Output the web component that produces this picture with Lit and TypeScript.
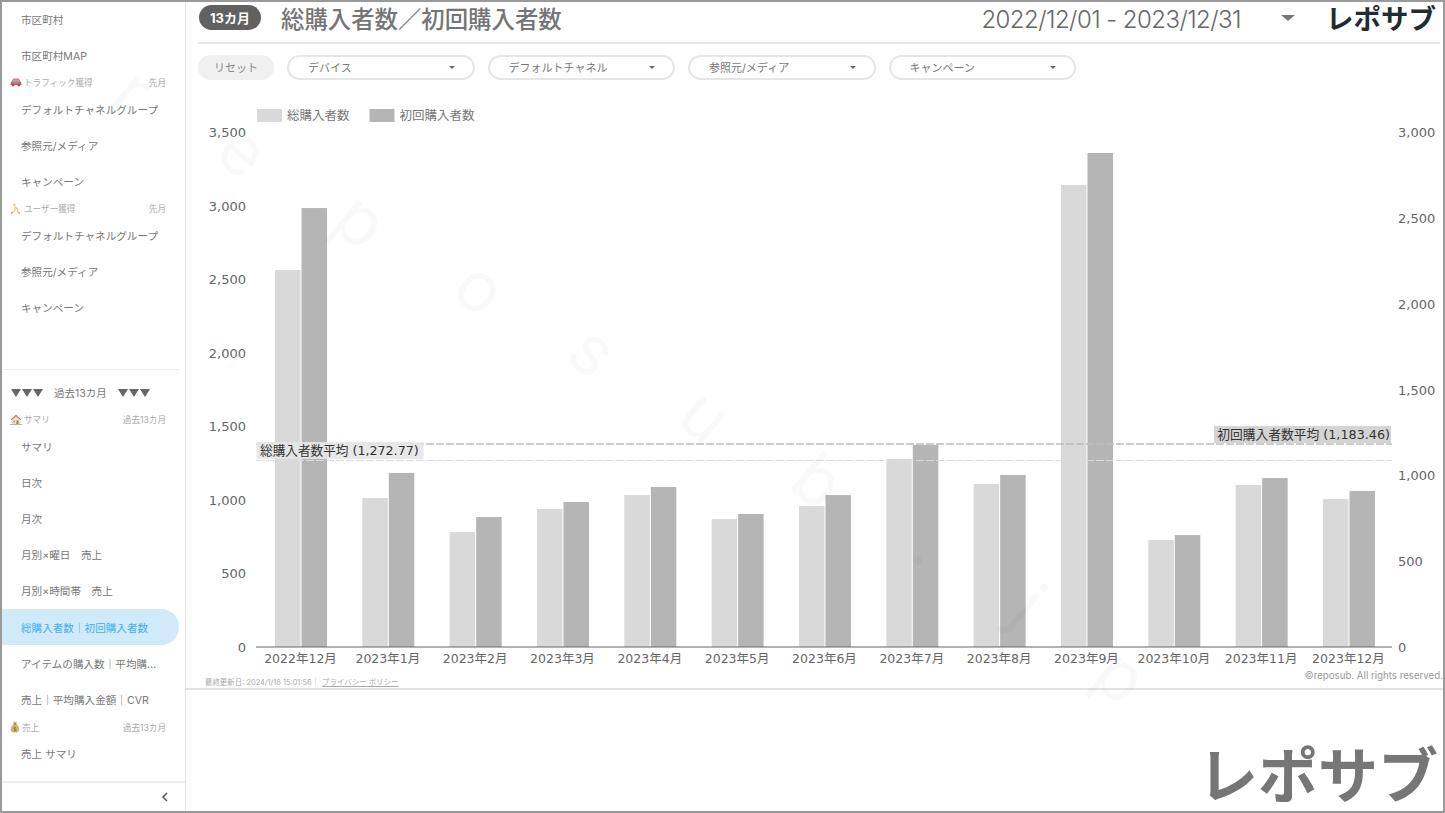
import { LitElement, html, css, svg } from "lit";
import { customElement } from "lit/decorators.js";

const months = ["2022年12月","2023年1月","2023年2月","2023年3月","2023年4月","2023年5月","2023年6月","2023年7月","2023年8月","2023年9月","2023年10月","2023年11月","2023年12月"];
const total = [2562,1013,782,938,1033,870,958,1278,1108,3140,727,1101,1006];
const first = [2557,1014,757,845,932,775,885,1177,1002,2878,652,984,909];
const base = 647, top = 132;
const yL = (v: number) => base - (v / 3500) * (base - top);
const yR = (v: number) => base - (v / 3000) * (base - top);
const wm: [string, number, number][] = [["r",130,95],["e",240,155],["p",358,225],["o",477,292],["s",590,355],["u",702,420],["b",815,485],[".",927,549],["j",1025,610],["p",1118,680]];

const car = svg`<svg width="12" height="10" viewBox="0 0 12 10"><path d="M1 5.500 3 2.200Q3.400 1.500 4.400 1.500H8Q9 1.500 9.400 2.400L10.600 5 11.500 5.800V8H.5V6Z" fill="#e2666c"/><path d="M3.600 2.600H8.400L9.200 4.800H2.600Z" fill="#7cc0d8"/><circle cx="3" cy="8" r="1.400" fill="#666"/><circle cx="9" cy="8" r="1.400" fill="#666"/></svg>`;
const runner = svg`<svg width="12" height="11" viewBox="0 0 12 11"><circle cx="4.500" cy="1.800" r="1.400" fill="#ecd59c"/><path d="M4.500 3.500 7 5.500 7.500 8.500 9.500 10M5 5 4.500 7.500 2 10" fill="none" stroke="#e3c98f" stroke-width="1.300"/><path d="M1 10.500 2.500 9.500M8.500 10.500 10 9.500" stroke="#9a8fc4" stroke-width="1.200"/></svg>`;
const house = svg`<svg width="12" height="11" viewBox="0 0 12 11"><path d="M2 5.500 6 1.500l4 4V10H2Z" fill="#efe0c0"/><path d="M.6 5.600 6 .8l5.400 4.800-.8.600L6 2.200 1.400 6.200Z" fill="#c2686a"/><rect x="3" y="6.500" width="2" height="2" fill="#8fc4d8"/><rect x="6.500" y="6.500" width="2" height="3.500" fill="#9a7a5b"/><path d="M0 10.500H12" stroke="#a4c284"/></svg>`;
const bag = svg`<svg width="10" height="12" viewBox="0 0 10 12"><path d="M3.200 .8H6.800L6 3C8.500 4.500 9.500 7 9.300 9 9 11 7.500 11.500 5 11.500S1 11 .7 9C.5 7 1.500 4.500 4 3Z" fill="#d8b36d"/><path d="M3.500 3H6.500" stroke="#8d6c36"/><text x="5" y="9.500" font-size="6" text-anchor="middle" fill="#7a5a25" font-family="DejaVu Sans">$</text></svg>`;

@customElement("app-root")
export class AppRoot extends LitElement {
  static styles = css`
    :host { display: block; width: 1445px; height: 813px; overflow: hidden; background: #fff; font-family: Inter, "Noto Sans CJK JP", sans-serif; color: #757575; }
    .frame { position: relative; box-sizing: border-box; width: 1445px; height: 813px; border: 2px solid #9a9a9a; display: flex; overflow: hidden; }
    .side { width: 183px; flex: none; border-right: 1px solid #e4e4e4; display: flex; flex-direction: column; margin-top: -1px; height: 810px; }
    .list { flex: none; }
    .item { display: flex; align-items: center; height: 36px; padding-left: 19px; font-size: 10.600px; color: #777; white-space: nowrap; }
    .lower .item { height: 36.200px; }
    .item.active { background: #d1eafa; color: #3fb0ef; border-radius: 0 18px 18px 0; width: 158px; }
    .head { display: flex; align-items: center; height: 18px; padding: 0 19px 0 8px; font-size: 8.600px; color: #aaa; gap: 2px; }
    .head span:last-of-type { margin-left: auto; }
    .head svg { flex: none; }
    .rule { margin: 44px 6px 5px 1px; border-top: 1px solid #eee; }
    .past { display: flex; align-items: center; height: 35px; padding-left: 9px; font-size: 10.500px; color: #777; gap: 11px; }
    .tri { display: flex; gap: 1px; }
    .tri i { width: 0; height: 0; border-left: 5px solid transparent; border-right: 5px solid transparent; border-top: 8px solid #666; }
    .foot { margin-top: 9px; border-top: 2px solid #eee; flex: 1; display: flex; justify-content: flex-end; align-items: center; padding-right: 16px; }
    .main { flex: 1; min-width: 0; display: flex; flex-direction: column; }
    .top { display: flex; align-items: center; height: 40px; margin: 0 3px 0 12px; border-bottom: 2px solid #e8e8e8; box-sizing: content-box; }
    .badge { width: 62px; height: 25px; margin-left: 1px; border-radius: 13px; background: #616161; color: #fff; font-size: 13px; font-weight: 700; display: flex; align-items: center; justify-content: center; margin-top: -9px; }
    .title { margin: -9px 0 0 20px; font-size: 23.400px; font-weight: 500; color: #757575; white-space: nowrap; }
    .date { margin: -5px 0 0 auto; font-size: 24px; font-weight: 300; color: #666; white-space: nowrap; letter-spacing: -.55px; }
    .caret { width: 0; height: 0; border-left: 7px solid transparent; border-right: 7px solid transparent; border-top: 6px solid #777; margin: -8px 0 0 40px; }
    .logo { margin: -9px 4px 0 31px; font-family: "Noto Sans CJK JP", sans-serif; font-weight: 700; font-size: 27.500px; line-height: 1.3; color: #1f2d33; white-space: nowrap; }
    .filters { display: flex; gap: 13px; margin: 11px 0 0 12px; }
    .reset { box-sizing: border-box; width: 76px; height: 25px; padding-bottom: 2px; border-radius: 13px; background: #f0f0f0; font-size: 11px; color: #888; display: flex; align-items: center; justify-content: center; }
    .sel { box-sizing: border-box; width: 187.500px; height: 25px; border: 2px solid #e6e6e6; border-radius: 13px; font-size: 11px; color: #777; display: flex; align-items: center; justify-content: space-between; padding: 0 18px 1px 19px; }
    .sel i { width: 0; height: 0; border-left: 3px solid transparent; border-right: 3px solid transparent; border-top: 3px solid #666; }
    .chart { display: block; margin-top: 15px; }
    .chart text { font-family: "DejaVu Sans", "Noto Sans CJK JP", sans-serif; }
    .meta { position: relative; height: 0; }
    .upd { position: absolute; left: 19px; top: 3px; font-size: 7.450px; color: #aaa; white-space: nowrap; }
    .upd u { margin-left: 3px; }
    .copy { position: absolute; right: 0; top: -3px; font-size: 9.700px; color: #999; white-space: nowrap; }
    .hr { margin-top: 15px; border-top: 2px solid #e2e2e2; }
    .bottom { flex: 1; display: flex; justify-content: flex-end; align-items: flex-end; padding: 0 5px 0 0; }
    .biglogo { font-family: "Noto Sans CJK JP", sans-serif; font-weight: 700; font-size: 60px; line-height: 1.3; color: #767676; white-space: nowrap; }
    .wm { position: absolute; left: -2px; top: -2px; pointer-events: none; }
    .wm text { font-family: Inter, sans-serif; font-size: 70px; fill: #000; fill-opacity: .025; }
  `;

  private items(list: string[], active = "") {
    return list.map((t) => html`<div class="item ${t === active ? "active" : ""}">${t}</div>`);
  }
  private head(icon: unknown, a: string, b: string) {
    return html`<div class="head">${icon}<span>${a}</span><span>${b}</span></div>`;
  }
  private tris() {
    return html`<span class="tri"><i></i><i></i><i></i></span>`;
  }

  private chart() {
    const c = (i: number) => 301 + 87.33 * i;
    return svg`<svg class="chart" width="1257" height="578" viewBox="186 95 1257 578">
      <rect x="257" y="109" width="25" height="13" fill="#d9d9d9"/>
      <text x="287" y="120" font-size="12.500" fill="#777">総購入者数</text>
      <rect x="369.500" y="109" width="25" height="13" fill="#b5b5b5"/>
      <text x="399.500" y="120" font-size="12.500" fill="#777">初回購入者数</text>
      ${[0,500,1000,1500,2000,2500,3000,3500].map((v) => svg`<text x="246" y="${yL(v) + 5}" text-anchor="end" font-size="13" fill="#666">${v.toLocaleString("en-US")}</text>`)}
      ${[0,500,1000,1500,2000,2500,3000].map((v) => svg`<text x="1398" y="${yR(v) + 5}" font-size="13" fill="#666">${v.toLocaleString("en-US")}</text>`)}
      ${months.map((m, i) => svg`
        <rect x="${c(i) - 26}" y="${yL(total[i])}" width="25.500" height="${base - yL(total[i])}" fill="#d9d9d9"/>
        <rect x="${c(i) + 0.500}" y="${yR(first[i])}" width="25.500" height="${base - yR(first[i])}" fill="#b5b5b5"/>
        <text x="${c(i) - 0.500}" y="663" text-anchor="middle" font-size="12.500" fill="#666">${m}</text>`)}
      <line x1="256" x2="1392" y1="647" y2="647" stroke="#666" stroke-width="1"/>
      <line x1="256" x2="1392" y1="460.500" y2="460.500" stroke="#dcdcdc" stroke-dasharray="8 2"/>
      <line x1="256" x2="1392" y1="444" y2="444" stroke="#bdbdbd" stroke-width="1.500" stroke-dasharray="8 2"/>
      <rect x="256.500" y="442" width="167" height="17" fill="#e6e6e6" fill-opacity=".92"/>
      <text x="260" y="455" font-size="12.650" fill="#333">総購入者数平均 (1,272.77)</text>
      <rect x="1214" y="426" width="177" height="17" fill="#d0d0d0" fill-opacity=".92"/>
      <text x="1390" y="438.500" text-anchor="end" font-size="12.750" fill="#333">初回購入者数平均 (1,183.46)</text>
    </svg>`;
  }

  render() {
    return html`<div class="frame">
      <aside class="side">
        <div class="list">
          ${this.items(["市区町村", "市区町村MAP"])}
          ${this.head(car, "トラフィック獲得", "先月")}
          ${this.items(["デフォルトチャネルグループ", "参照元/メディア", "キャンペーン"])}
          ${this.head(runner, "ユーザー獲得", "先月")}
          ${this.items(["デフォルトチャネルグループ", "参照元/メディア", "キャンペーン"])}
          <div class="rule"></div>
          <div class="past">${this.tris()}<span>過去13カ月</span>${this.tris()}</div>
          <div class="lower">
            ${this.head(house, "サマリ", "過去13カ月")}
            ${this.items(["サマリ", "日次", "月次", "月別×曜日　売上", "月別×時間帯　売上", "総購入者数｜初回購入者数", "アイテムの購入数｜平均購…", "売上｜平均購入金額｜CVR"], "総購入者数｜初回購入者数")}
            ${this.head(bag, "売上", "過去13カ月")}
            ${this.items(["売上 サマリ"])}
          </div>
        </div>
        <div class="foot">
          <svg width="8" height="10" viewBox="0 0 8 10"><path d="M6 1 2 5l4 4" fill="none" stroke="#555" stroke-width="1.500"/></svg>
        </div>
      </aside>
      <main class="main">
        <header class="top">
          <div class="badge">13カ月</div>
          <div class="title">総購入者数／初回購入者数</div>
          <div class="date">2022/12/01 - 2023/12/31</div>
          <div class="caret"></div>
          <div class="logo">レポサブ</div>
        </header>
        <div class="filters">
          <div class="reset">リセット</div>
          ${["デバイス", "デフォルトチャネル", "参照元/メディア", "キャンペーン"].map((f) => html`<div class="sel"><span>${f}</span><i></i></div>`)}
        </div>
        ${this.chart()}
        <div class="meta">
          <span class="upd">最終更新日: 2024/1/18 15:01:56｜<u>プライバシー ポリシー</u></span>
          <span class="copy">©reposub. All rights reserved.</span>
        </div>
        <div class="hr"></div>
        <div class="bottom"><div class="biglogo">レポサブ</div></div>
      </main>
      <svg class="wm" width="1445" height="813" viewBox="0 0 1445 813">
        ${wm.map(([t, x, y]) => svg`<text x="${x}" y="${y}" text-anchor="middle" dominant-baseline="middle" transform="rotate(40 ${x} ${y})">${t}</text>`)}
      </svg>
    </div>`;
  }
}
